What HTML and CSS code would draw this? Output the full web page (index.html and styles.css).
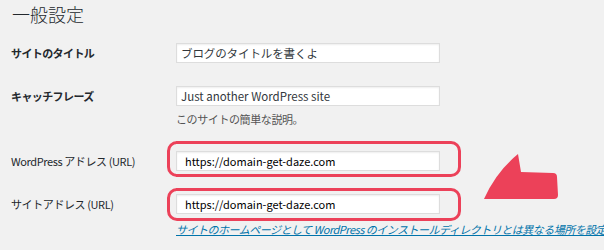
FILE: index.html
```html
<!DOCTYPE html>
<html lang="ja">
<head>
    <meta charset="UTF-8">
    <title>一般設定</title>
    <link rel="stylesheet" href="styles.css">
</head>
<body>
    <div class="wrap">
        <h1>一般設定</h1>

        <div class="form-row first">
            <label class="row-label strong" for="blogname">サイトのタイトル</label>
            <div class="field">
                <input type="text" id="blogname" class="text-input" value="ブログのタイトルを書くよ">
            </div>
        </div>

        <div class="form-row">
            <label class="row-label strong" for="blogdescription">キャッチフレーズ</label>
            <div class="field">
                <input type="text" id="blogdescription" class="text-input small-text" value="Just another WordPress site">
                <p class="description">このサイトの簡単な説明。</p>
            </div>
        </div>

        <div class="form-row url-row">
            <label class="row-label" for="siteurl">WordPress アドレス (URL)</label>
            <div class="field marked">
                <input type="text" id="siteurl" class="text-input url-input" value="https://domain-get-daze.com">
                <span class="mark mark-top"></span>
            </div>
        </div>

        <div class="form-row url-row">
            <label class="row-label" for="home">サイトアドレス (URL)</label>
            <div class="field marked">
                <input type="text" id="home" class="text-input url-input" value="https://domain-get-daze.com">
                <span class="mark mark-bottom"></span>
            </div>
        </div>

        <p class="home-note"><a href="#">サイトのホームページとして WordPress のインストールディレクトリとは異なる場所を設定</a></p>
    </div>

    <!-- 注釈の矢印 -->
    <svg class="arrow" width="82" height="52" viewBox="0 0 82 52">
        <path d="M4 49 Q16 22 38 4 L41 22 L73 23 Q77 23 77 27 L78 45 Q78 49 74 49 Z" fill="#ec4159"/>
    </svg>
</body>
</html>
```

FILE: styles.css
```css
* {
    margin: 0;
    padding: 0;
    box-sizing: border-box;
}

body {
    font-family: "Noto Sans CJK JP", "Noto Sans", sans-serif;
    background: #f1f1f1;
    color: #23282d;
    width: 604px;
    height: 250px;
    overflow: hidden;
    position: relative;
}

.wrap {
    padding-left: 11px;
    white-space: nowrap;
}

h1 {
    font-size: 18px;
    font-weight: 300;
    line-height: 26px;
    margin-top: 1px;
    padding-left: 1px;
    color: #23282d;
}

.form-row {
    display: grid;
    grid-template-columns: 165px 264px;
    margin-top: 23px;
}

.form-row.first {
    margin-top: 16px;
}

.row-label {
    font-size: 11px;
    line-height: 20px;
    letter-spacing: -0.4px;
}

.row-label.strong {
    font-weight: 700;
    letter-spacing: -0.6px;
}

.field {
    position: relative;
}

.text-input {
    display: block;
    width: 264px;
    height: 20px;
    border: 1px solid #ddd;
    background: #fff;
    box-shadow: inset 0 1px 2px rgba(0, 0, 0, 0.07);
    font-family: inherit;
    font-size: 11.5px;
    color: #32373c;
    padding: 0 4px;
    letter-spacing: -0.1px;
}

.small-text {
    font-size: 11.5px;
    letter-spacing: 0;
}

.url-input {
    font-size: 11px;
    color: #000;
    padding-left: 8px;
    letter-spacing: 0;
}

.description {
    font-size: 11px;
    line-height: 18px;
    margin-top: 4px;
    color: #555;
    letter-spacing: -0.4px;
}

.mark {
    position: absolute;
    left: -9px;
    right: -21px;
    border: 3.5px solid #ec4159;
    border-radius: 10px;
    pointer-events: none;
    z-index: 2;
}

.mark-top {
    top: -10px;
    bottom: -6px;
}

.mark-bottom {
    top: -6px;
    bottom: -7px;
}

.home-note {
    margin-top: 7px;
    margin-left: 165px;
    font-size: 11px;
    line-height: 16px;
    letter-spacing: -0.5px;
}

.home-note a {
    color: #0073aa;
    font-style: italic;
}

.arrow {
    position: absolute;
    left: 480px;
    top: 150px;
}
```
